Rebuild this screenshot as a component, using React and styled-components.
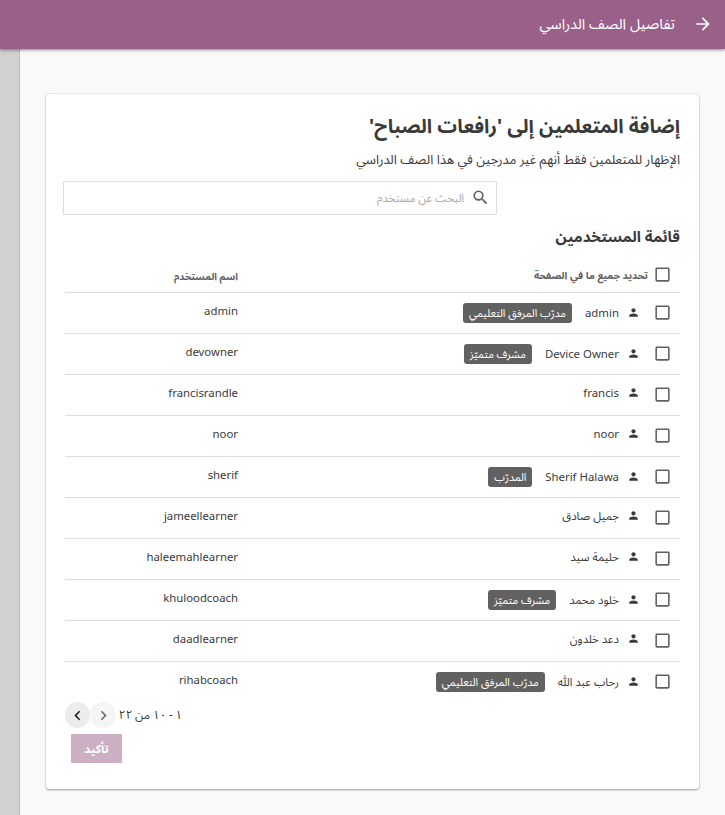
import React from 'react';
import styled, { createGlobalStyle } from 'styled-components';

const Global = createGlobalStyle`
  *, *::before, *::after { box-sizing: border-box; }
  body { margin: 0; background: #f9f9f9; color: #3a3a3a; font-family: "Noto Sans", "Noto Sans Arabic", "DejaVu Sans", sans-serif; overflow: hidden; }
`;

const Page = styled.div`
  direction: rtl;
  display: flex;
  flex-direction: column;
  height: 815px;
`;
const AppBar = styled.header`
  z-index: 1;
  flex: none;
  display: flex;
  align-items: center;
  gap: 18px;
  height: 49px;
  padding: 0 12px 1px 0;
  color: #fff;
  background: #996189;
  box-shadow: 0 1px 4px rgba(0, 0, 0, 0.3), 0 1px 2px rgba(0, 0, 0, 0.2);
`;
const BarTitle = styled.h1`
  margin: 0;
  padding-bottom: 2px;
  font-size: 14.6px;
  font-weight: 400;
  line-height: 46px;
  white-space: nowrap;
`;
const Body = styled.div`
  flex: 1;
  display: flex;
`;
const Main = styled.main`
  flex: 1;
  padding: 45px 26px 26px;
`;
const Gutter = styled.aside`
  flex: none;
  width: 20px;
  background: #d1d1d1;
  border-right: 1px solid #bdbdbd;
`;
const Card = styled.section`
  display: flex;
  flex-direction: column;
  height: 695px;
  padding: 15px 19px 0;
  background: #fff;
  border-radius: 3px;
  box-shadow: 0 1px 2px rgba(0, 0, 0, 0.34), 0 0 2px rgba(0, 0, 0, 0.14);
`;
const Text = styled.p`
  margin: 0;
  height: ${(p) => p.$height}px;
  font-size: ${(p) => p.$size}px;
  font-weight: ${(p) => (p.$bold ? 700 : 400)};
  line-height: ${(p) => p.$line || p.$height}px;
  white-space: nowrap;
`;
const Search = styled.label`
  display: flex;
  align-items: center;
  gap: 7px;
  width: 434px;
  height: 34px;
  margin: 7px auto 0 -2px;
  padding: 0 6px 2px 0;
  border: 1px solid #dedede;
  border-radius: 1px;
  color: #616161;
`;
const SearchInput = styled.input`
  flex: 1;
  min-width: 0;
  padding: 1px 0 0;
  border: 0;
  outline: 0;
  background: transparent;
  font: 400 11.25px/30px "Noto Sans", "Noto Sans Arabic", "DejaVu Sans", sans-serif;
  &::placeholder { color: #a8a8a8; opacity: 1; }
`;
const Table = styled.div`
  display: flex;
  flex-direction: column;
`;
const Row = styled.div`
  display: grid;
  grid-template-columns: 442px 1fr;
  height: 41px;
  border-bottom: 1px solid ${(p) => (p.$last ? 'transparent' : '#dedede')};
`;
const HeadRow = styled(Row)`
  height: 38px;
  color: #616161;
  font-weight: 700;
`;
const Cell = styled.div`
  display: flex;
  align-items: flex-start;
  white-space: nowrap;
`;
const CheckBox = styled.span`
  flex: none;
  margin: 10px 8px 0 0;
  color: #616161;
`;
const HeadLabel = styled.span`
  margin: ${(p) => p.$top}px ${(p) => p.$start}px 0 0;
  font-size: ${(p) => p.$size}px;
  line-height: 20px;
`;
const Identity = styled.div`
  display: flex;
  align-items: center;
  height: 20px;
  margin: ${(p) => (p.$tagged ? 10 : 8)}px 13px 0 0;
  font-size: 11.4px;
`;
const PersonMark = styled.span`
  padding-bottom: 2px;
`;
const Name = styled.bdi`
  margin-right: 8px;
  line-height: 20px;
`;
const Badge = styled.span`
  height: 20px;
  margin-right: 13px;
  padding: 0 6px;
  border-radius: 3px;
  background: #616161;
  color: #fff;
  font-size: 10.75px;
  line-height: 20px;
`;
const Username = styled.bdi`
  margin-top: 8px;
  font-size: 11.35px;
  line-height: 20px;
`;
const Pager = styled.nav`
  display: flex;
  justify-content: flex-end;
  align-items: center;
  height: 26px;
  margin-top: -1px;
  font-size: 12px;
`;
const PageButton = styled.button`
  display: flex;
  align-items: center;
  justify-content: center;
  width: 25.4px;
  height: 26px;
  padding: 0;
  border: 0;
  border-radius: 50%;
  background: ${(p) => (p.$dim ? '#f5f5f5' : '#ececec')};
  color: ${(p) => (p.$dim ? '#6a6a6a' : '#212121')};
`;
const PageRange = styled.span`
  margin-left: 3px;
  line-height: 26px;
  word-spacing: -0.6px;
`;
const Digits = styled.span`
  letter-spacing: ${(p) => (p.$tight ? -2 : -0.6)}px;
`;
const Confirm = styled.button`
  width: 51px;
  height: 29px;
  margin: 6px auto 0 6px;
  padding: 0;
  border: 0;
  border-radius: 1px;
  background: #cbb0c4;
  color: #fff;
  font: 700 11.6px/29px "Noto Sans", "Noto Sans Arabic", "DejaVu Sans", sans-serif;
`;
const Svg = styled.svg`
  flex: none;
  display: block;
  width: ${(p) => p.$size}px;
  height: ${(p) => p.$size}px;
  fill: currentColor;
`;

const paths = {
  arrow: 'M12 4l-1.41 1.41L16.17 11H4v2h12.17l-5.58 5.59L12 20l8-8z',
  box: 'M19 5v14H5V5h14m0-2H5c-1.1 0-2 .9-2 2v14c0 1.1.9 2 2 2h14c1.1 0 2-.9 2-2V5c0-1.1-.9-2-2-2z',
  search: 'M15.5 14h-.79l-.28-.27A6.471 6.471 0 0 0 16 9.5 6.5 6.5 0 1 0 9.5 16c1.61 0 3.09-.59 4.23-1.57l.27.28v.79l5 4.99L20.49 19l-4.99-5zm-6 0C7.01 14 5 11.99 5 9.5S7.01 5 9.5 5 14 7.01 14 9.5 11.99 14 9.5 14z',
  person: 'M12 12c2.21 0 4-1.79 4-4s-1.79-4-4-4-4 1.79-4 4 1.79 4 4 4zm0 2c-2.67 0-8 1.34-8 4v2h16v-2c0-2.66-5.33-4-8-4z',
  right: 'M10 6L8.59 7.41 13.17 12l-4.58 4.59L10 18l6-6z',
  left: 'M15.41 7.41L14 6l-6 6 6 6 1.41-1.41L10.83 12z',
};
const Icon = ({ name, size }) => (
  <Svg $size={size} viewBox="0 0 24 24" aria-hidden="true"><path d={paths[name]} /></Svg>
);

const users = [
  ['admin', 'admin', 'مدرّب المرفق التعليمي'],
  ['Device Owner', 'devowner', 'مشرف متميّز'],
  ['francis', 'francisrandle'],
  ['noor', 'noor'],
  ['Sherif Halawa', 'sherif', 'المدرّب'],
  ['جميل صادق', 'jameellearner'],
  ['حليمة سيد', 'haleemahlearner'],
  ['خلود محمد', 'khuloodcoach', 'مشرف متميّز'],
  ['دعد خلدون', 'daadlearner'],
  ['رحاب عبد اللّٰه', 'rihabcoach', 'مدرّب المرفق التعليمي'],
];

export default function App() {
  return (
    <Page lang="ar">
      <Global />
      <AppBar>
        <Icon name="arrow" size={20} />
        <BarTitle>تفاصيل الصف الدراسي</BarTitle>
      </AppBar>
      <Body>
        <Main>
          <Card>
            <Text as="h2" $size={19.55} $height={34} $bold>إضافة المتعلمين إلى 'رافعات الصباح'</Text>
            <Text $size={13} $height={31} $line={33}>الإظهار للمتعلمين فقط أنهم غير مدرجين في هذا الصف الدراسي</Text>
            <Search>
              <Icon name="search" size={19} />
              <SearchInput placeholder="البحث عن مستخدم" />
            </Search>
            <Text as="h3" $size={15.15} $height={40} $line={42} $bold>قائمة المستخدمين</Text>
            <Table>
              <HeadRow>
                <Cell>
                  <CheckBox><Icon name="box" size={19} /></CheckBox>
                  <HeadLabel $top={10} $start={5} $size={10.1}>تحديد جميع ما في الصفحة</HeadLabel>
                </Cell>
                <Cell><HeadLabel $top={12} $start={0} $size={9.8}>اسم المستخدم</HeadLabel></Cell>
              </HeadRow>
              {users.map(([name, username, role], i) => (
                <Row key={username} $last={i === users.length - 1}>
                  <Cell>
                    <CheckBox><Icon name="box" size={19} /></CheckBox>
                    <Identity $tagged={!!role}>
                      <PersonMark><Icon name="person" size={13} /></PersonMark>
                      <Name>{name}</Name>
                      {role && <Badge>{role}</Badge>}
                    </Identity>
                  </Cell>
                  <Cell><Username>{username}</Username></Cell>
                </Row>
              ))}
            </Table>
            <Pager>
              <PageRange>١ - <Digits $tight>١٠</Digits> من <Digits>٢٢</Digits></PageRange>
              <PageButton $dim><Icon name="right" size={19} /></PageButton>
              <PageButton><Icon name="left" size={19} /></PageButton>
            </Pager>
            <Confirm>تأكيد</Confirm>
          </Card>
        </Main>
        <Gutter />
      </Body>
    </Page>
  );
}
